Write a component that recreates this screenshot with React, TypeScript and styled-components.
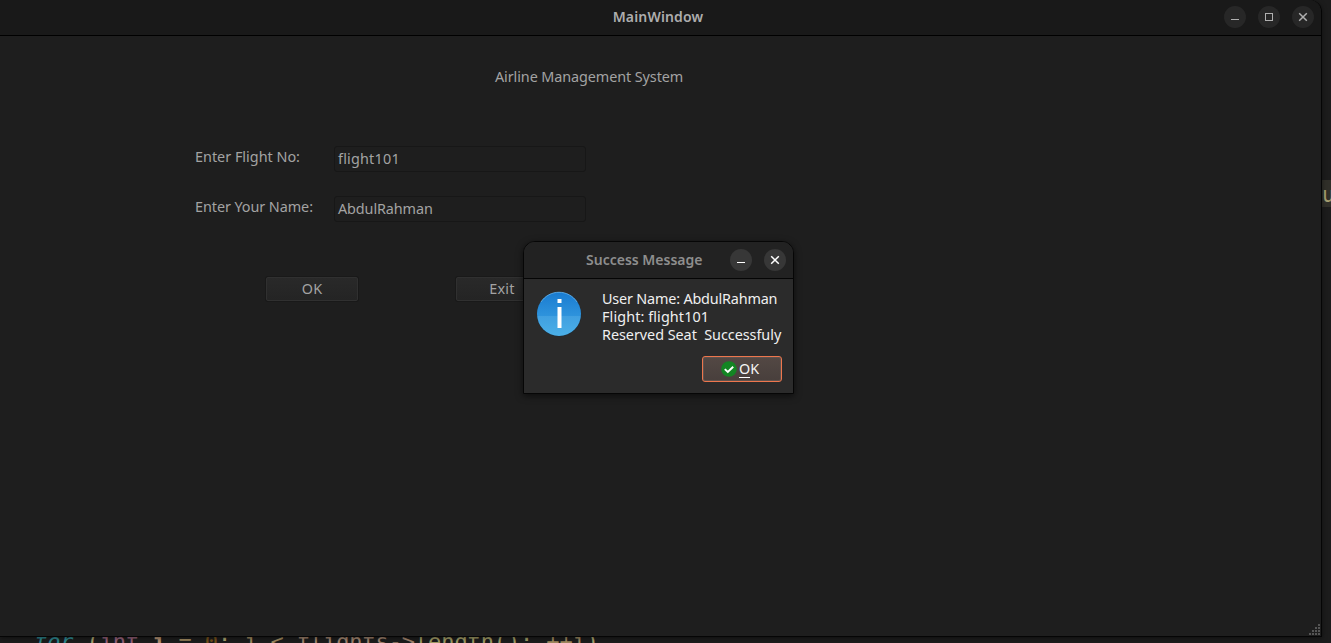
import React from "react";
import styled, { createGlobalStyle } from "styled-components";

const GlobalStyle = createGlobalStyle`
  * { box-sizing: border-box; }
  body {
    margin: 0;
    overflow: hidden;
    background: #1a1a1a;
    font-family: "Noto Sans", "Open Sans", sans-serif;
    font-size: 14.4px;
    line-height: 18px;
    color: #a3a3a3;
  }
`;

const Desktop = styled.div`
  position: relative;
  width: 1331px;
  height: 643px;
  overflow: hidden;
  background: #1c1c1c;
`;

const CodeLine = styled.pre`
  position: absolute;
  left: 34px;
  top: 629px;
  margin: 0;
  font-family: "DejaVu Sans Mono", monospace;
  font-size: 22px;
  line-height: 26px;
  letter-spacing: -0.11px;
  color: #a0895f;
`;

const Keyword = styled.span`
  color: #2e8790;
  font-style: italic;
`;

const Token = styled.span<{ $color: string; $bold?: boolean }>`
  color: ${(p) => p.$color};
  font-weight: ${(p) => (p.$bold ? 700 : 400)};
`;

const CodeFragment = styled.div`
  position: absolute;
  left: 1322px;
  top: 180px;
  width: 20px;
  height: 27px;
  background: #302f29;
  color: #a59f72;
  font-family: "DejaVu Sans Mono", monospace;
  font-size: 21px;
  line-height: 31px;
`;

const Window = styled.section`
  position: relative;
  width: 1322px;
  height: 637px;
  display: flex;
  flex-direction: column;
  background: #1e1e1e;
  border: solid #050505;
  border-width: 0 1px 1px 0;
  border-top-right-radius: 12px;
  box-shadow: 0 1px 5px rgba(0, 0, 0, 0.5);
`;

const TitleBar = styled.header`
  flex: none;
  height: 36px;
  display: grid;
  grid-template-columns: 1fr auto 1fr;
  align-items: center;
  padding: 0 7px 2px 2px;
  background: #191919;
  border-bottom: 1px solid #000;
  border-top-right-radius: 12px;
`;

const WindowTitle = styled.h1<{ $color: string; $spacing: number }>`
  grid-column: 2;
  margin: 0;
  font-size: 14px;
  line-height: 18px;
  font-weight: 600;
  white-space: nowrap;
  letter-spacing: ${(p) => p.$spacing}px;
  color: ${(p) => p.$color};
`;

const Controls = styled.div`
  grid-column: 3;
  justify-self: end;
  display: flex;
  gap: 12px;
`;

const RoundButton = styled.button<{ $bg: string; $fg: string }>`
  width: 22px;
  height: 22px;
  padding: 0;
  border: 0;
  border-radius: 50%;
  display: grid;
  place-items: center;
  background: ${(p) => p.$bg};
  color: ${(p) => p.$fg};
`;

const Content = styled.main`
  flex: 1;
  display: flex;
  flex-direction: column;
  align-items: flex-start;
`;

const Text = styled.span<{ $spacing?: number }>`
  white-space: pre;
  letter-spacing: ${(p) => p.$spacing ?? 0}px;
`;

const Heading = styled.div`
  padding: 32px 0 0 495px;
  height: 110px;
`;

const Form = styled.form`
  display: grid;
  grid-template-columns: 139px 252px;
  grid-auto-rows: 26px;
  row-gap: 24px;
  margin-left: 195px;
`;

const Label = styled.label`
  padding-top: 2px;
`;

const Field = styled.div`
  display: flex;
  align-items: center;
  height: 26px;
  padding-left: 3px;
  border: 1px solid #171717;
  border-radius: 3px;
  background: #1e1e1e;
`;

const Actions = styled.div`
  display: flex;
  gap: 98px;
  padding: 55px 0 0 266px;
`;

const PushButton = styled.button`
  width: 92px;
  height: 24px;
  padding: 0;
  border: 1px solid #303030;
  border-radius: 2px;
  background: linear-gradient(#292929, #242424);
  box-shadow: 0 0 0 1px #191919;
  color: inherit;
  font: inherit;
`;

const Grip = styled.svg`
  position: absolute;
  right: 1px;
  bottom: 1px;
`;

const Dialog = styled.section`
  position: absolute;
  left: 523px;
  top: 241px;
  width: 271px;
  height: 153px;
  display: flex;
  flex-direction: column;
  border: 1px solid #060606;
  border-radius: 12px 12px 0 0;
  background: #2b2b2b;
  box-shadow: 0 2px 7px rgba(0, 0, 0, 0.6);
  color: #f0f0f0;
  overflow: hidden;
`;

const DialogBar = styled.header`
  flex: none;
  height: 37px;
  display: flex;
  align-items: center;
  justify-content: space-between;
  padding: 0 7px 0 62px;
  background: #222;
  border-bottom: 1px solid #050505;
`;

const DialogBody = styled.div`
  display: grid;
  grid-template-columns: 65px 1fr;
  padding: 11px 0 0 13px;
`;

const Message = styled.div`
  display: flex;
  flex-direction: column;
`;

const DialogFooter = styled.footer`
  display: flex;
  justify-content: flex-end;
  padding: 12px 11px 0 0;
`;

const ConfirmButton = styled.button`
  width: 80px;
  height: 26px;
  display: flex;
  align-items: center;
  justify-content: center;
  gap: 2px;
  padding: 0 4px 0 0;
  border: 1px solid #ed764d;
  border-radius: 3px;
  background: linear-gradient(#534844, #483f3c);
  box-shadow: inset 0 0 0 1px #5f524d;
  color: #f5f5f5;
  font: inherit;
`;

const Mnemonic = styled.span`
  display: inline-block;
  height: 18px;
  border-bottom: 1px solid #fff;
`;

const Minimize = () => (
  <svg width="12" height="12" shapeRendering="crispEdges">
    <path d="M2 8h8v1H2z" fill="currentColor" />
  </svg>
);

const Maximize = () => (
  <svg width="12" height="12" shapeRendering="crispEdges">
    <rect x="2.5" y="2.5" width="7" height="7" fill="none" stroke="currentColor" />
  </svg>
);

const Close = () => (
  <svg width="12" height="12">
    <path d="M2.2 2.2l7.6 7.6M9.8 2.2L2.2 9.8" stroke="currentColor" strokeWidth="1.5" />
  </svg>
);

const InfoIcon = () => (
  <svg width="46" height="47" viewBox="0 -1 46 47">
    <defs>
      <linearGradient id="info" x2="0" y2="1">
        <stop offset="0" stopColor="#197bd0" />
        <stop offset="0.54" stopColor="#2e93dc" />
        <stop offset="0.54" stopColor="#409fe0" />
        <stop offset="1" stopColor="#4bb0e8" />
      </linearGradient>
    </defs>
    <circle cx="22" cy="23.4" r="22.2" fill="#1c2a35" />
    <circle cx="22" cy="23" r="22" fill="url(#info)" />
    <path d="M4 11a21.5 21.5 0 0 1 36 0" fill="none" stroke="#67b4eb" strokeWidth=".8" />
    <path d="M20.5 8h4v4h-4zM20.5 16h4v21h-4z" fill="#fff" />
  </svg>
);

const CheckIcon = () => (
  <svg width="16" height="16" viewBox="0 0 16 16">
    <circle cx="8" cy="8" r="7.8" fill="#138523" />
    <path d="M3.8 8.1l3 2.9 5.4-5.3" fill="none" stroke="#fff" strokeWidth="1.9" />
  </svg>
);

const gripDots = [0, 1, 2, 3].flatMap((row) =>
  Array.from({ length: row + 1 }, (_, i) => ({ x: 9 - i * 3, y: row * 3 }))
);

export default function App() {
  return (
    <>
      <GlobalStyle />
      <Desktop>
        <CodeLine>
          <Keyword>for</Keyword> <Token $color="#a8a16d">(</Token>
          <Token $color="#94607a">int</Token> <Token $color="#b18f70" $bold>i</Token> ={" "}
          <Token $color="#765019">0</Token>
          <Token $color="#a8a16d">;</Token> i &lt; <Token $color="#a1846f">flights-&gt;</Token>
          <Token $color="#a09b65">length();</Token> ++i<Token $color="#a8a16d">)</Token>
        </CodeLine>
        <CodeFragment>u</CodeFragment>
        <Window>
          <TitleBar>
            <WindowTitle $color="#adadad" $spacing={0.15}>MainWindow</WindowTitle>
            <Controls>
              <RoundButton $bg="#272727" $fg="#b0b0b0"><Minimize /></RoundButton>
              <RoundButton $bg="#272727" $fg="#b0b0b0"><Maximize /></RoundButton>
              <RoundButton $bg="#272727" $fg="#b0b0b0"><Close /></RoundButton>
            </Controls>
          </TitleBar>
          <Content>
            <Heading><Text $spacing={-0.09}>Airline Management System</Text></Heading>
            <Form>
              <Label><Text>Enter Flight No:</Text></Label>
              <Field><Text $spacing={0.2}>flight101</Text></Field>
              <Label><Text $spacing={-0.07}>Enter Your Name:</Text></Label>
              <Field><Text $spacing={-0.1}>AbdulRahman</Text></Field>
            </Form>
            <Actions>
              <PushButton><Text $spacing={0.2}>OK</Text></PushButton>
              <PushButton><Text $spacing={0.3}>Exit</Text></PushButton>
            </Actions>
          </Content>
          <Grip width="11" height="11" shapeRendering="crispEdges">
            {gripDots.map((d) => (
              <rect key={`${d.x}-${d.y}`} x={d.x} y={d.y} width="2" height="2" fill="#555" />
            ))}
          </Grip>
        </Window>
        <Dialog>
          <DialogBar>
            <WindowTitle $color="#8e8e8e" $spacing={0}>Success Message</WindowTitle>
            <Controls>
              <RoundButton $bg="#373737" $fg="#fff"><Minimize /></RoundButton>
              <RoundButton $bg="#373737" $fg="#fff"><Close /></RoundButton>
            </Controls>
          </DialogBar>
          <DialogBody>
            <InfoIcon />
            <Message>
              <Text $spacing={-0.18}>User Name: AbdulRahman</Text>
              <Text $spacing={0.1}>Flight: flight101</Text>
              <Text $spacing={-0.04}>{"Reserved Seat  Successfuly"}</Text>
            </Message>
          </DialogBody>
          <DialogFooter>
            <ConfirmButton>
              <CheckIcon />
              <Text><Mnemonic>O</Mnemonic>K</Text>
            </ConfirmButton>
          </DialogFooter>
        </Dialog>
      </Desktop>
    </>
  );
}
